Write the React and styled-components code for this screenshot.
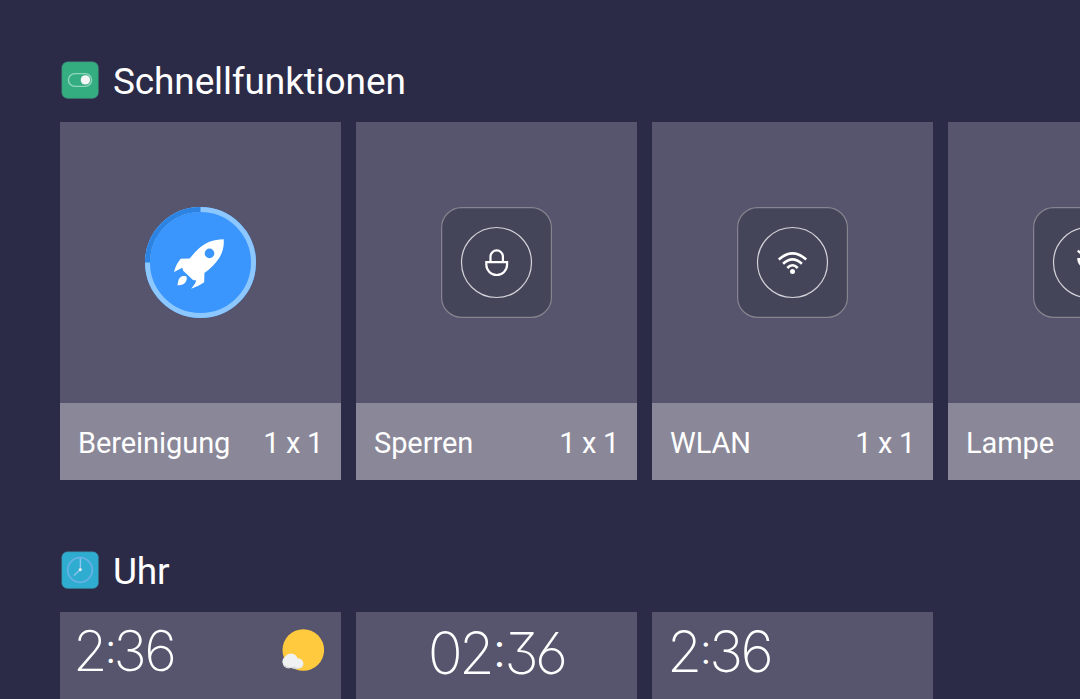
import React from "react";
import styled, { createGlobalStyle } from "styled-components";

const GlobalStyle = createGlobalStyle`
  * {
    box-sizing: border-box;
  }

  body {
    margin: 0;
    background: #2c2b47;
    color: #fff;
    font-family: Roboto, "Liberation Sans", sans-serif;
    overflow: hidden;
  }
`;

const Page = styled.main`
  height: 699px;
  padding: 58px 0 0 60px;
  overflow: hidden;
`;

const Section = styled.section`
  margin-bottom: 68px;
`;

const SectionHeader = styled.header`
  display: flex;
  align-items: center;
  gap: 14px;
  height: 44px;
  margin-bottom: 20px;
  padding-left: 1px;
`;

const SectionTitle = styled.h2`
  margin: 0;
  padding-top: 3px;
  font-size: 37px;
  line-height: 44px;
  font-weight: 400;
  letter-spacing: -0.13px;
`;

const CardRow = styled.div`
  display: flex;
  gap: 15px;
`;

const Card = styled.article`
  flex: 0 0 281px;
  background: #56556d;
`;

const Preview = styled.div`
  display: flex;
  align-items: center;
  justify-content: center;
  height: 281px;
`;

const Caption = styled.div`
  display: flex;
  align-items: center;
  justify-content: space-between;
  height: 77px;
  padding: 3px 18px 0;
  background: #8a8898;
  font-size: 29px;
  line-height: 36px;
  letter-spacing: -0.07px;
  white-space: nowrap;
`;

const GridSize = styled.span`
  letter-spacing: -0.3px;
`;

const ClockPreview = styled.div`
  display: flex;
  align-items: flex-start;
  justify-content: ${(props) => props.$justify || "space-between"};
  height: 281px;
  padding: ${(props) => props.$padding};
`;

const Time = styled.span`
  font-family: Inter, Roboto, sans-serif;
  font-size: ${(props) => props.$size};
  line-height: 56px;
  font-weight: 200;
  letter-spacing: ${(props) => props.$spacing};
  font-feature-settings: ${(props) => props.$features || "normal"};
  white-space: nowrap;
`;

const Colon = styled.span`
  margin: 0 ${(props) => props.$gap};
  font-size: ${(props) => props.$scale}em;
  font-weight: 300;
  line-height: 0;
  vertical-align: ${(props) => props.$raise};
`;

const Icon = styled.svg`
  display: block;
  flex: none;
  width: ${(props) => props.$size}px;
  height: ${(props) => props.$size}px;
  margin-top: ${(props) => props.$top || 0}px;
`;

function SwitchIcon() {
  return (
    <Icon $size={38} viewBox="0 0 38 38">
      <rect x="0.8" y="0.8" width="36.6" height="36.6" rx="6" fill="#34ad80" stroke="#477a78" strokeWidth="0.5" />
      <rect x="7.4" y="12.6" width="23.2" height="12.8" rx="6.4" fill="none" stroke="#92d5bd" strokeWidth="1.4" />
      <circle cx="24.4" cy="18.9" r="4.7" fill="#f5f5f5" />
    </Icon>
  );
}

function ClockIcon() {
  return (
    <Icon $size={38} viewBox="0 0 38 38">
      <rect x="0.8" y="0.8" width="36.6" height="36.6" rx="5.5" fill="#2eadd0" stroke="#438098" strokeWidth="0.5" />
      <circle cx="19" cy="19" r="12.3" fill="none" stroke="#69b1e5" strokeWidth="1.7" />
      <path d="M19.4 7.5V18.5L13 24.5" fill="none" stroke="#8cc4f0" strokeWidth="1.4" />
      <circle cx="19.3" cy="18.6" r="1.6" fill="#e0eaf0" />
    </Icon>
  );
}

function RocketIcon() {
  return (
    <Icon $size={111} viewBox="0 0 111 111">
      <circle cx="55.5" cy="55.5" r="55.5" fill="#3a96fd" />
      <circle cx="55.5" cy="55.5" r="53" fill="none" stroke="#8cc7ff" strokeWidth="5" />
      <path d="M2.5 55.5A53 53 0 0 1 55.5 2.5" fill="none" stroke="#2d83e2" strokeWidth="5" />
      <path
        d="M78.7 32.2C68 32.2 60 35.6 53 42.3C50 45.2 47.3 48.3 44.7 51.5L35.7 51.8C32.5 55.5 30.2 60 29 65L37.3 60.7L38.2 63.7L48 73.1L51.2 73.4L50.1 76.4L46.1 81.7C51.3 79.8 55.7 77.8 59.2 75.2L59.4 66.1C65.3 61.7 70.7 56.4 74.2 50.9C77.7 45.3 79.3 39.1 78.7 32.2Z"
        fill="#fff"
      />
      <circle cx="64.5" cy="46.4" r="4.8" fill="#3a96fd" />
      <path d="M41.2 69.3C38.8 68.5 36.3 68.8 34.6 71C32.9 73.2 33.2 75.7 32.4 78.3C35.5 78.2 38.4 78 40.3 75.5C42 73.2 42.1 71 41.2 69.3Z" fill="#fff" />
    </Icon>
  );
}

function TileIcon({ children }) {
  return (
    <Icon $size={111} viewBox="0 0 111 111">
      <rect x="0.6" y="0.6" width="109.8" height="109.8" rx="20" fill="#45455a" stroke="#85848f" strokeWidth="1.2" />
      <circle cx="55.5" cy="55.5" r="35" fill="none" stroke="#d3d3d9" strokeWidth="1.2" />
      {children}
    </Icon>
  );
}

function LockIcon() {
  return (
    <TileIcon>
      <g fill="none" stroke="#fff" strokeWidth="2.2">
        <path d="M49.5 54.5V49.6A6.2 6.2 0 0 1 61.9 49.6V54.5" />
        <path d="M45.3 55.2H66.1V57.6A10.4 10.4 0 0 1 45.3 57.6Z" />
      </g>
    </TileIcon>
  );
}

function WifiIcon() {
  return (
    <TileIcon>
      <g fill="none" stroke="#fff" strokeWidth="2.6">
        <path d="M41.8 52.4Q55.5 40.4 69.2 52.4" />
        <path d="M46.1 56.8Q55.5 47.8 64.9 56.8" />
        <path d="M50.3 61Q55.5 55.4 60.7 61" />
      </g>
      <circle cx="55.5" cy="64.4" r="2.5" fill="#fff" />
    </TileIcon>
  );
}

function LampIcon() {
  return (
    <TileIcon>
      <path d="M44.8 43.6L47.8 46.2M66.2 43.6L63.2 46.2" fill="none" stroke="#fff" strokeWidth="2.4" />
      <path d="M44.2 51H66.8C66.8 56 64 59.5 60 61.5V70H51V61.5C47 59.5 44.2 56 44.2 51Z" fill="#fff" />
    </TileIcon>
  );
}

function WeatherIcon() {
  return (
    <Icon $size={42} $top={6} viewBox="0 0 42 42">
      <circle cx="21.3" cy="21" r="20.8" fill="#ffca3e" />
      <g fill="#d9dadd">
        <circle cx="6.6" cy="33.5" r="6" />
        <ellipse cx="14" cy="35.8" rx="7.5" ry="4.2" />
      </g>
      <g fill="#f0f1f2">
        <circle cx="9" cy="31.4" r="6.9" />
        <circle cx="5.5" cy="32.2" r="5" />
        <circle cx="16.5" cy="34.3" r="4.8" />
      </g>
    </Icon>
  );
}

const functions = [
  { name: "Bereinigung", size: "1 x 1", icon: RocketIcon },
  { name: "Sperren", size: "1 x 1", icon: LockIcon },
  { name: "WLAN", size: "1 x 1", icon: WifiIcon },
  { name: "Lampe", icon: LampIcon },
];

function App() {
  return (
    <>
      <GlobalStyle />
      <Page>
        <Section>
          <SectionHeader>
            <SwitchIcon />
            <SectionTitle>Schnellfunktionen</SectionTitle>
          </SectionHeader>
          <CardRow>
            {functions.map((item) => (
              <Card key={item.name}>
                <Preview>
                  <item.icon />
                </Preview>
                <Caption>
                  <span>{item.name}</span>
                  {item.size && <GridSize>{item.size}</GridSize>}
                </Caption>
              </Card>
            ))}
          </CardRow>
        </Section>

        <Section>
          <SectionHeader>
            <ClockIcon />
            <SectionTitle>Uhr</SectionTitle>
          </SectionHeader>
          <CardRow>
            <Card>
              <ClockPreview $padding="11px 17px 0 13px">
                <Time $size="56px" $spacing="-2.6px">
                  2<Colon $scale={0.72} $raise="8px" $gap="-0.1px">:</Colon>36
                </Time>
                <WeatherIcon />
              </ClockPreview>
            </Card>
            <Card>
              <ClockPreview $padding="13px 1px 0 0" $justify="center">
                <Time $size="58px" $spacing="-3.8px" $features={'"cv03", "cv04", "cv09"'}>
                  02<Colon $scale={0.82} $raise="7px" $gap="1.8px">:</Colon>36
                </Time>
              </ClockPreview>
            </Card>
            <Card>
              <ClockPreview $padding="12px 0 0 15px">
                <Time $size="57px" $spacing="-2.6px">
                  2<Colon $scale={0.72} $raise="8px" $gap="0.4px">:</Colon>36
                </Time>
              </ClockPreview>
            </Card>
          </CardRow>
        </Section>
      </Page>
    </>
  );
}

export default App;
